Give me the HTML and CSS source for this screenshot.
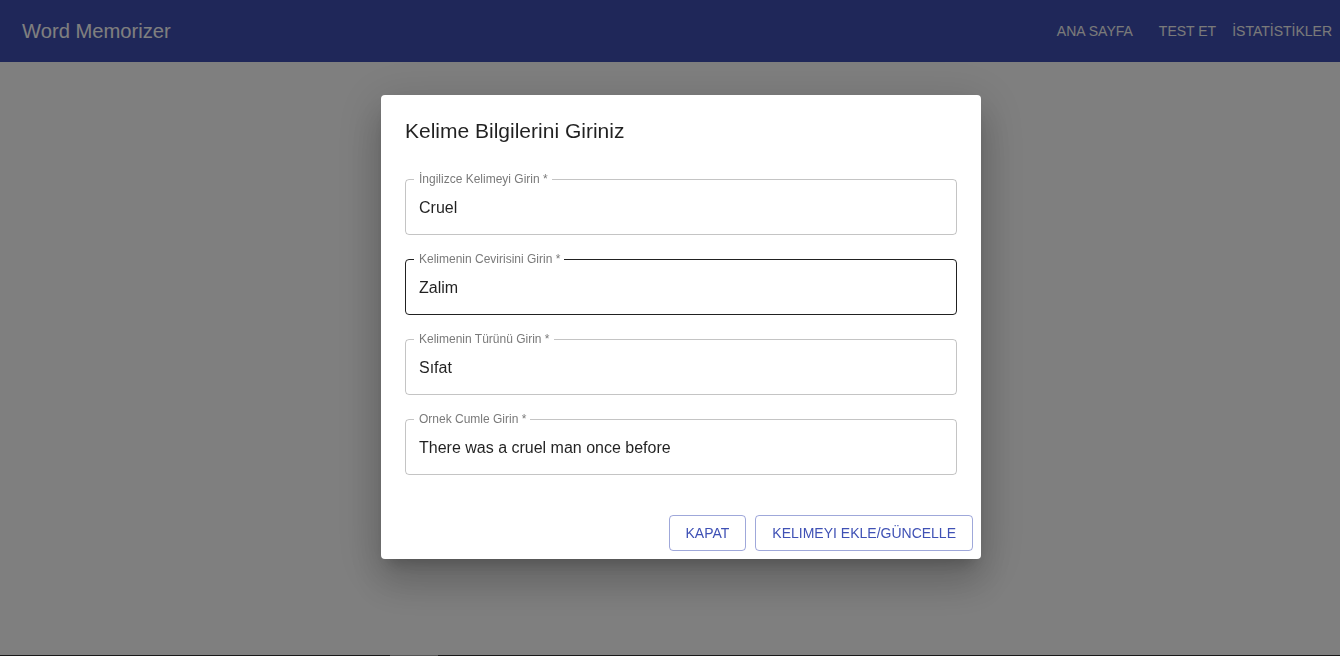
FILE: index.html
```html
<!DOCTYPE html>
<html lang="tr">
<head>
<meta charset="utf-8">
<title>Word Memorizer</title>
<link rel="stylesheet" href="styles.css">
</head>
<body>
<div class="page">
  <header class="appbar">
    <div class="brand">Word Memorizer</div>
    <nav class="nav">
      <a class="nav-link nav-home">ANA SAYFA</a>
      <a class="nav-link nav-test">TEST ET</a>
      <a class="nav-link nav-stats">İSTATİSTİKLER</a>
    </nav>
  </header>
  <main class="main"></main>
  <div class="bottom-line"><span class="bottom-thumb"></span></div>
</div>

<div class="backdrop">
  <div class="dialog">
    <h2 class="dialog-title">Kelime Bilgilerini Giriniz</h2>
    <div class="dialog-content">
      <div class="field">
        <div class="field-input">Cruel</div>
        <fieldset class="outline"><legend>İngilizce Kelimeyi Girin *</legend></fieldset>
      </div>
      <div class="field field-hover">
        <div class="field-input">Zalim</div>
        <fieldset class="outline"><legend>Kelimenin Cevirisini Girin *</legend></fieldset>
      </div>
      <div class="field">
        <div class="field-input">Sıfat</div>
        <fieldset class="outline"><legend>Kelimenin Türünü Girin *</legend></fieldset>
      </div>
      <div class="field">
        <div class="field-input">There was a cruel man once before</div>
        <fieldset class="outline"><legend>Ornek Cumle Girin *</legend></fieldset>
      </div>
    </div>
    <div class="dialog-actions">
      <button class="btn-outlined">KAPAT</button>
      <button class="btn-outlined">KELIMEYI EKLE/GÜNCELLE</button>
    </div>
  </div>
</div>
</body>
</html>
```

FILE: styles.css
```css
* { box-sizing: border-box; }

html, body {
  margin: 0;
  padding: 0;
  height: 100%;
  overflow: hidden;
}

body {
  font-family: "Liberation Sans", Arial, sans-serif;
  background: #ffffff;
  color: rgba(0, 0, 0, 0.87);
}

.page {
  display: flex;
  flex-direction: column;
  height: 100vh;
}

.appbar {
  height: 62px;
  flex: 0 0 62px;
  background: #3e4eb2;
  color: #ffffff;
  display: flex;
  align-items: center;
  padding: 0 8px 0 22px;
}

.brand {
  font-size: 20.2px;
  line-height: 1;
  flex: 1;
}

.nav {
  display: flex;
  align-items: center;
}

.nav-link {
  font-size: 14px;
  line-height: 1;
  text-transform: uppercase;
  color: #f4f4f4;
}

.nav-test { margin-left: 26px; }
.nav-stats { margin-left: 16px; }

.main {
  flex: 1;
}

.bottom-line {
  height: 1px;
  flex: 0 0 1px;
  background: #333333;
  display: flex;
}

.bottom-thumb {
  margin-left: 390px;
  width: 48px;
  height: 1px;
  background: #aaaaaa;
}

.backdrop {
  position: fixed;
  inset: 0;
  background: rgba(0, 0, 0, 0.5);
  display: flex;
  align-items: center;
  justify-content: center;
  padding-left: 22px;
  padding-bottom: 2px;
}

.dialog {
  width: 600px;
  background: #ffffff;
  border-radius: 4px;
  box-shadow:
    0px 11px 15px -7px rgba(0, 0, 0, 0.2),
    0px 24px 38px 3px rgba(0, 0, 0, 0.14),
    0px 9px 46px 8px rgba(0, 0, 0, 0.12);
  display: flex;
  flex-direction: column;
}

.dialog-title {
  margin: 0;
  padding: 20px 24px 0;
  font-size: 21px;
  font-weight: normal;
  line-height: 32px;
  color: rgba(0, 0, 0, 0.87);
}

.dialog-content {
  padding: 32px 24px 32px;
  display: flex;
  flex-direction: column;
  gap: 24px;
}

.field {
  position: relative;
  height: 56px;
}

.field-input {
  padding: 16.5px 14px;
  font-size: 16px;
  line-height: 23px;
  color: rgba(0, 0, 0, 0.87);
  white-space: nowrap;
}

.outline {
  position: absolute;
  top: -5px;
  left: 0;
  right: 0;
  bottom: 0;
  margin: 0;
  padding: 0 8px;
  border: 1px solid rgba(0, 0, 0, 0.23);
  border-radius: 4px;
  pointer-events: none;
}

.field-hover .outline {
  border-color: rgba(0, 0, 0, 0.87);
}

.outline legend {
  padding: 0 4px 0 5px;
  font-size: 12px;
  line-height: 11px;
  color: #7a7a7a;
  white-space: nowrap;
}

.dialog-actions {
  display: flex;
  justify-content: flex-end;
  align-items: center;
  gap: 9px;
  padding: 8px;
}

.btn-outlined {
  font-family: "Liberation Sans", Arial, sans-serif;
  font-size: 14px;
  line-height: 24px;
  letter-spacing: 0;
  text-transform: uppercase;
  color: #3f51b5;
  background: transparent;
  border: 1px solid rgba(63, 81, 181, 0.5);
  border-radius: 4px;
  padding: 5px 16px;
  height: 36px;
  min-width: 64px;
  cursor: pointer;
}
```
